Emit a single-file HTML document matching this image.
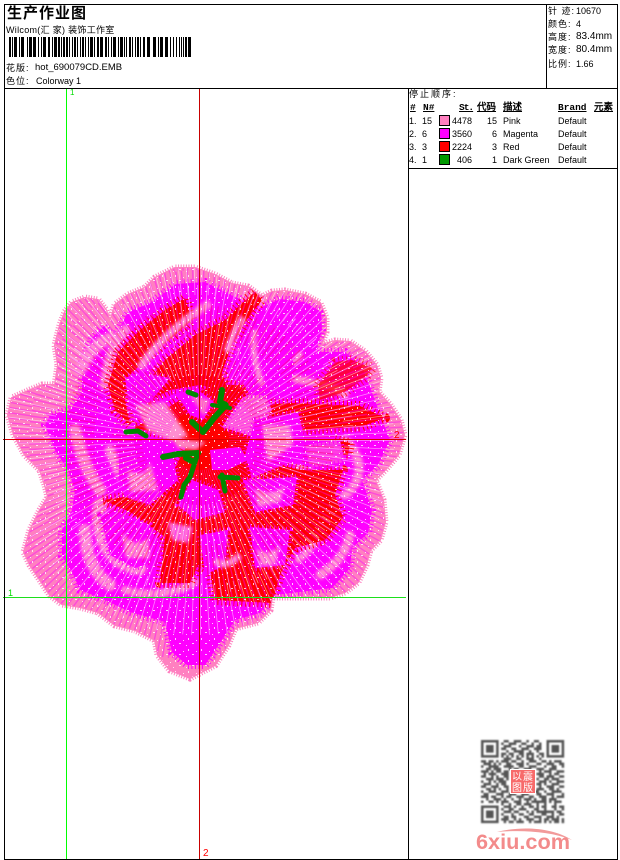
<!DOCTYPE html>
<html>
<head>
<meta charset="utf-8">
<style>
html,body{margin:0;padding:0;background:#fff}
body{position:relative;width:620px;height:860px;overflow:hidden;font-family:"Liberation Sans","WenQuanYi Zen Hei","Noto Sans CJK SC",sans-serif;color:#000;font-size:9px}
.t{position:absolute;white-space:nowrap;line-height:12px;height:12px}
.l{position:absolute;background:#000}
.r{text-align:right}
.c{letter-spacing:1px}
.h{font-weight:bold;text-decoration:underline;font-family:"Liberation Mono","WenQuanYi Zen Hei",monospace;font-size:9.5px}
.sw{position:absolute;width:9px;height:9px;border:1px solid #000}
svg{position:absolute;left:0;top:0}
</style>
</head>
<body>
<svg width="620" height="860" viewBox="0 0 620 860">
<defs>
<path id="s" d="M65 312L72 303L85 298L98 300L106 310L110 322L115 305L128 295L145 288L155 278L175 268L195 268L215 275L232 284L248 287L262 297L272 292L285 291L305 295L320 303L326 318L326 332L321 345L335 341L350 342L365 352L376 365L380 378L378 392L390 405L400 420L404 435L398 455L385 470L375 480L383 500L385 522L380 540L370 550L366 565L358 582L345 592L330 597L272 597L270 610L258 622L235 628L228 645L215 665L190 678L170 670L158 655L155 640L135 630L115 625L98 612L80 607L62 604L50 595L40 580L30 565L24 552L30 530L40 510L48 497L45 485L40 470L25 455L14 435L8 415L12 398L30 390L42 385L55 385L58 365L55 345L60 325Z"/>
<clipPath id="c"><use href="#s"/></clipPath>
<pattern id="sp" width="13" height="11" patternUnits="userSpaceOnUse">
  <rect x="1" y="2" width="1" height="1" fill="#fff"/>
  <rect x="6" y="0" width="1" height="2" fill="#fff"/>
  <rect x="10" y="5" width="2" height="1" fill="#fff"/>
  <rect x="4" y="7" width="1" height="1" fill="#fff"/>
</pattern>
<filter id="q"><feGaussianBlur stdDeviation=".35"/></filter>
<filter id="b" x="-20%" y="-20%" width="140%" height="140%"><feGaussianBlur stdDeviation="1.6"/></filter>
</defs>

<!-- flower base -->
<use href="#s" fill="#ff80c0" stroke="#ff80c0" stroke-width="2"/>
<use href="#s" fill="none" stroke="#ff80c0" stroke-width="7" stroke-dasharray="1 1.6"/>

<g clip-path="url(#c)">
  <!-- magenta body -->
  <path d="M92 338L104 326L114 338L128 312L152 302L176 284L205 282L235 297L262 307L280 299L305 302L321 312L322 330L316 352L345 352L362 367L370 387L383 422L390 440L378 465L362 480L372 510L368 533L352 548L350 568L332 588L275 595L260 613L235 620L220 643L205 665L187 665L172 652L165 622L130 612L105 600L80 590L72 572L62 556L62 530L72 510L75 490L68 470L55 450L45 425L50 415L70 410L82 392L82 362Z" fill="#f0f" stroke="#f0f" stroke-width="8" stroke-dasharray="1 2.5"/>

  <!-- pale areas -->
  <g fill="none" stroke="#ff8ed0" stroke-linecap="round" filter="url(#b)">
    <path d="M80 370C90 350 100 340 112 338" stroke-width="12"/>
    <path d="M105 385C108 362 112 345 125 330" stroke-width="10"/>
    <path d="M75 430C80 450 85 470 100 490" stroke-width="12"/>
    <path d="M85 530C85 555 95 575 110 585" stroke-width="12"/>
    <path d="M100 505C95 535 110 565 140 568" stroke-width="14"/>
    <path d="M125 590C150 598 180 592 195 582" stroke-width="8"/>
    <path d="M280 370C295 385 330 380 345 395" stroke-width="8"/>
    <path d="M345 440C362 455 365 480 345 495" stroke-width="9"/>
    <path d="M320 575C335 565 345 555 350 535" stroke-width="9"/>
    <path d="M298 560C318 545 325 525 320 505" stroke-width="7"/>
    <path d="M110 450C120 480 135 500 165 500" stroke-width="10"/>
    <path d="M245 510C265 520 285 505 300 470" stroke-width="10"/>
    <path d="M240 350C245 375 280 385 300 355" stroke-width="6"/>
  </g>

  <!-- red regions -->
  <g fill="#f00" stroke="#f00" stroke-width="10" stroke-dasharray="1 3" stroke-linejoin="round">
    <path d="M118 352L140 330L165 310L185 298L192 320L175 335L150 355L130 375L125 400L130 425L115 410L108 385Z"/>
    <path d="M255 292L262 300L245 322L232 345L222 372L228 392L200 385L170 390L150 400L145 385L165 360L195 335L225 320L240 305Z"/>
    <path d="M318 385L335 362L352 360L372 368L365 378L340 395L320 400Z" opacity=".75"/>
    <path d="M263 405L290 403L360 406L385 418L360 427L300 430L283 437L265 437Z"/>
    <path d="M335 440L350 443L348 455L335 455Z"/>
    <path d="M103 500L125 497L150 505L168 480L190 440L135 428L180 400L215 385L250 385L248 415L265 440L280 465L300 470L343 470L335 495L343 518L325 540L295 548L280 575L272 603L215 600L210 570L198 565L190 583L160 583L165 537L130 512Z"/>
  </g>

  <!-- petals over red -->
  <g stroke-width="6" stroke-dasharray="1 3" stroke-linejoin="round">
    <path d="M125 378L140 372L170 378L150 402L130 410Z" fill="#f0f" stroke="#f0f"/>
    <path d="M176 393L198 390L214 402L203 420L190 415Z" fill="#f0f" stroke="#f0f"/>
    <path d="M222 427L242 398L262 388L272 410L254 437Z" fill="#ff66d8" stroke="#f0f"/>
    <path d="M120 440L170 448L178 480L150 505L118 490Z" fill="#f0f" stroke="#f0f"/>
    <path d="M210 450L240 447L248 460L228 470L212 470Z" fill="#f0f"/>
    <path d="M255 420L298 412L305 440L290 462L252 478L245 455Z" fill="#f0f" stroke="#f0f"/>
    <path d="M243 480L297 477L293 505L255 512Z" fill="#f0f" stroke="#f0f"/>
    <path d="M305 445L340 440L345 462L310 468Z" fill="#ff40e0" stroke="#f0f"/>
    <path d="M192 480L218 490L225 512L195 520L178 505Z" fill="#f0f" stroke="#f0f"/>
    <path d="M100 515L120 512L150 525L160 560L135 568L110 555Z" fill="#f0f" stroke="#f0f"/>
    <path d="M250 527L290 530L285 565L255 568Z" fill="#f0f" stroke="#f0f"/>
    <path d="M200 535L228 530L225 565L205 575Z" fill="#f0f" stroke="#f0f"/>
    <path d="M240 340L258 325L285 330L295 370L285 395L250 395L238 375Z" fill="#f0f" stroke="#f0f"/>
  </g>
  <g filter="url(#b)">
    <path d="M135 405L165 402L188 436L170 441L147 430Z" fill="#ff8ed0"/>
    <path d="M172 438L206 442L196 450L178 448Z" fill="#ff80c0"/>
    <path d="M190 395L210 400L204 416Z" fill="#ff80c0"/>
    <path d="M262 425L290 425L293 445L268 462Z" fill="#ff8ed0"/>
    <path d="M128 470Q145 480 150 462L158 490L130 492Z" fill="#ff8ed0"/>
    <path d="M255 488Q272 498 285 485L280 502L258 507Z" fill="#ff8ed0"/>
    <path d="M122 532Q135 550 148 538L150 558L126 558Z" fill="#ff8ed0"/>
    <path d="M256 548Q268 558 280 545L275 565L260 566Z" fill="#ff8ed0"/>
    <path d="M168 522L193 527L188 543L172 540Z" fill="#ff70d8"/>
    <path d="M140 368Q160 335 210 303" fill="none" stroke="#ff8ed0" stroke-width="8"/>
    <path d="M243 317Q232 335 227 352" fill="none" stroke="#ff8ed0" stroke-width="7"/>
    <path d="M255 330Q250 350 262 385" fill="none" stroke="#ff8ed0" stroke-width="6"/>
    <path d="M215 560Q225 570 240 555" fill="none" stroke="#ff8ed0" stroke-width="7"/>
  </g>

  <!-- radial stitch streaks -->
  <g fill="none" stroke="#f0f" opacity=".42">
    <circle cx="199" cy="440" r="50" stroke-width="40" stroke-dasharray="1 2"/>
    <circle cx="199" cy="440" r="95" stroke-width="50" stroke-dasharray="1.2 3"/>
    <circle cx="199" cy="440" r="145" stroke-width="50" stroke-dasharray="1.4 3.4"/>
    <circle cx="199" cy="440" r="195" stroke-width="50" stroke-dasharray="1.4 3.8"/>
  </g>
  <g fill="none" stroke="#f00" opacity=".3">
    <circle cx="199" cy="440" r="72" stroke-width="30" stroke-dasharray="1 4"/>
    <circle cx="199" cy="440" r="120" stroke-width="30" stroke-dasharray="1 5"/>
  </g>
  <g fill="none" stroke="#fff" opacity=".5">
    <circle cx="199" cy="440" r="110" stroke-width="90" stroke-dasharray=".8 6"/>
    <circle cx="199" cy="440" r="170" stroke-width="50" stroke-dasharray=".8 7"/>
  </g>

  <!-- speckle -->
  <use href="#s" fill="url(#sp)" opacity=".8"/>

  <!-- green -->
  <g fill="none" stroke="#008a00" stroke-width="5" stroke-linecap="round" stroke-linejoin="round" stroke-dasharray="4 .8">
    <path d="M126 432L138 431L146 436" stroke-width="5"/>
    <path d="M188 392L196 395"/>
    <path d="M222 390L220 402L226 405L214 418L203 432L192 422" stroke-width="6"/>
    <path d="M212 405L230 408" stroke-width="4"/>
    <path d="M163 457L178 454L198 453M186 458L194 462" stroke-width="6"/>
    <path d="M197 456L190 477L184 485L181 497" stroke-width="5"/>
    <path d="M220 477L238 478M222 475L225 491" stroke-width="5"/>
  </g>
</g>

<!-- guide lines -->
<rect x="66" y="88" width="1" height="771" fill="#0f0"/>
<rect x="199" y="88" width="1" height="771" fill="#c80000"/>
<rect x="3" y="439" width="403" height="1" fill="#d80000"/>
<rect x="3" y="597" width="403" height="1" fill="#1be01b"/>

<!-- barcode -->
<g fill="#000">
<rect x="9" y="37" width="2" height="20"/><rect x="12" y="37" width="1" height="20"/><rect x="14" y="37" width="3" height="20"/><rect x="19" y="37" width="1" height="20"/><rect x="21" y="37" width="3" height="20"/><rect x="27" y="37" width="1" height="20"/><rect x="29" y="37" width="3" height="20"/><rect x="33" y="37" width="3" height="20"/><rect x="38" y="37" width="1" height="20"/><rect x="41" y="37" width="1" height="20"/><rect x="43" y="37" width="3" height="20"/><rect x="48" y="37" width="2" height="20"/><rect x="52" y="37" width="1" height="20"/><rect x="54" y="37" width="3" height="20"/><rect x="58" y="37" width="2" height="20"/><rect x="61" y="37" width="1" height="20"/><rect x="63" y="37" width="2" height="20"/><rect x="66" y="37" width="2" height="20"/><rect x="69" y="37" width="1" height="20"/><rect x="72" y="37" width="1" height="20"/><rect x="74" y="37" width="2" height="20"/><rect x="77" y="37" width="1" height="20"/><rect x="80" y="37" width="1" height="20"/><rect x="82" y="37" width="2" height="20"/><rect x="85" y="37" width="1" height="20"/><rect x="88" y="37" width="1" height="20"/><rect x="90" y="37" width="3" height="20"/><rect x="94" y="37" width="1" height="20"/><rect x="97" y="37" width="2" height="20"/><rect x="100" y="37" width="3" height="20"/><rect x="105" y="37" width="2" height="20"/><rect x="108" y="37" width="1" height="20"/><rect x="111" y="37" width="1" height="20"/><rect x="113" y="37" width="3" height="20"/><rect x="118" y="37" width="1" height="20"/><rect x="120" y="37" width="3" height="20"/><rect x="124" y="37" width="1" height="20"/><rect x="126" y="37" width="1" height="20"/><rect x="129" y="37" width="2" height="20"/><rect x="132" y="37" width="1" height="20"/><rect x="135" y="37" width="1" height="20"/><rect x="137" y="37" width="2" height="20"/><rect x="140" y="37" width="1" height="20"/><rect x="143" y="37" width="2" height="20"/><rect x="147" y="37" width="3" height="20"/><rect x="153" y="37" width="3" height="20"/><rect x="158" y="37" width="1" height="20"/><rect x="160" y="37" width="3" height="20"/><rect x="165" y="37" width="3" height="20"/><rect x="170" y="37" width="1" height="20"/><rect x="173" y="37" width="1" height="20"/><rect x="176" y="37" width="1" height="20"/><rect x="179" y="37" width="1" height="20"/><rect x="181" y="37" width="1" height="20"/><rect x="183" y="37" width="1" height="20"/><rect x="185" y="37" width="2" height="20"/><rect x="188" y="37" width="3" height="20"/>
</g>

<!-- QR -->
<g transform="translate(481 740) scale(2.52)" fill="none" stroke="#555" stroke-width="1" filter="url(#q)">
<path d="M0 .5h7M9 .5h2M13 .5h3M18 .5h1M21 .5h2M26 .5h7
M0 1.5h1M6 1.5h1M8 1.5h1M11 1.5h3M16 1.5h2M20 1.5h1M23 1.5h1M26 1.5h1M32 1.5h1
M0 2.5h1M2 2.5h3M6 2.5h1M9 2.5h3M15 2.5h1M18 2.5h3M22 2.5h2M26 2.5h1M28 2.5h3M32 2.5h1
M0 3.5h1M2 3.5h3M6 3.5h1M8 3.5h2M12 3.5h2M16 3.5h3M21 3.5h3M26 3.5h1M28 3.5h3M32 3.5h1
M0 4.5h1M2 4.5h3M6 4.5h1M10 4.5h1M13 4.5h4M19 4.5h1M22 4.5h1M26 4.5h1M28 4.5h3M32 4.5h1
M0 5.5h1M6 5.5h1M8 5.5h2M11 5.5h2M15 5.5h2M18 5.5h3M23 5.5h2M26 5.5h1M32 5.5h1
M0 6.5h7M8 6.5h1M10 6.5h1M12 6.5h1M14 6.5h1M16 6.5h1M18 6.5h1M20 6.5h1M22 6.5h1M24 6.5h1M26 6.5h7
M9 7.5h3M14 7.5h2M18 7.5h3M23 7.5h1
M0 8.5h2M3 8.5h2M6 8.5h1M8 8.5h3M12 8.5h2M16 8.5h1M19 8.5h3M24 8.5h2M27 8.5h1M29 8.5h3
M1 9.5h3M5 9.5h1M7 9.5h1M10 9.5h2M14 9.5h3M18 9.5h1M22 9.5h2M26 9.5h3M31 9.5h2
M0 10.5h1M3 10.5h3M6 10.5h1M9 10.5h4M15 10.5h2M19 10.5h3M25 10.5h1M28 10.5h2M32 10.5h1
M2 11.5h2M5 11.5h3M11 11.5h1M13 11.5h2M17 11.5h3M22 11.5h3M27 11.5h3
M0 12.5h3M4 12.5h1M6 12.5h2M9 12.5h2M15 12.5h1M20 12.5h1M23 12.5h1M25 12.5h3M30 12.5h3
M1 13.5h1M3 13.5h3M8 13.5h3M22 13.5h3M27 13.5h1M29 13.5h2
M0 14.5h2M4 14.5h1M6 14.5h1M9 14.5h2M23 14.5h2M26 14.5h3M31 14.5h2
M2 15.5h3M6 15.5h3M10 15.5h1M22 15.5h1M25 15.5h2M28 15.5h3
M0 16.5h1M3 16.5h1M5 16.5h1M7 16.5h3M23 16.5h3M27 16.5h1M30 16.5h3
M1 17.5h3M6 17.5h1M8 17.5h2M22 17.5h2M25 17.5h1M28 17.5h3
M0 18.5h2M4 18.5h3M9 18.5h2M23 18.5h1M26 18.5h3M31 18.5h2
M2 19.5h2M5 19.5h1M7 19.5h1M10 19.5h1M22 19.5h3M27 19.5h2M30 19.5h1
M0 20.5h1M3 20.5h3M8 20.5h3M13 20.5h2M17 20.5h1M20 20.5h3M25 20.5h1M28 20.5h4
M1 21.5h2M6 21.5h3M11 21.5h3M16 21.5h3M22 21.5h2M26 21.5h3M32 21.5h1
M0 22.5h3M4 22.5h2M8 22.5h1M10 22.5h2M14 22.5h3M19 22.5h2M23 22.5h3M28 22.5h1M30 22.5h3
M2 23.5h1M5 23.5h3M9 23.5h1M12 23.5h1M15 23.5h1M17 23.5h3M21 23.5h1M24 23.5h2M27 23.5h3
M0 24.5h1M3 24.5h2M6 24.5h1M8 24.5h3M13 24.5h3M18 24.5h1M20 24.5h6M27 24.5h1M29 24.5h3
M8 25.5h1M11 25.5h1M14 25.5h2M17 25.5h3M22 25.5h1M25 25.5h1M29 25.5h1
M0 26.5h7M9 26.5h3M13 26.5h1M16 26.5h1M19 26.5h2M22 26.5h1M24 26.5h1M25 26.5h1M28 26.5h2M31 26.5h2
M0 27.5h1M6 27.5h1M8 27.5h1M11 27.5h2M15 27.5h3M21 27.5h2M25 27.5h1M29 27.5h1M32 27.5h1
M0 28.5h1M2 28.5h3M6 28.5h1M9 28.5h3M13 28.5h2M18 28.5h1M20 28.5h1M22 28.5h7M30 28.5h2
M0 29.5h1M2 29.5h3M6 29.5h1M8 29.5h1M12 29.5h1M15 29.5h2M19 29.5h2M24 29.5h2M28 29.5h1M31 29.5h2
M0 30.5h1M2 30.5h3M6 30.5h1M9 30.5h2M12 30.5h2M17 30.5h2M21 30.5h3M26 30.5h3M30 30.5h1
M0 31.5h1M6 31.5h1M8 31.5h3M13 31.5h1M15 31.5h1M18 31.5h3M23 31.5h1M25 31.5h2M28 31.5h3M32 31.5h1
M0 32.5h7M9 32.5h1M11 32.5h2M14 32.5h3M19 32.5h1M21 32.5h3M25 32.5h1M27 32.5h1M29 32.5h2M32 32.5h1"/>
</g>
<rect x="510" y="769" width="26" height="25" fill="#fff"/>
<rect x="511" y="770" width="24" height="23" fill="#f76a6a"/>
<text x="512" y="780" font-size="10" fill="#fff" font-family="'WenQuanYi Zen Hei','Noto Sans CJK SC',sans-serif">以</text>
<text x="523" y="780" font-size="10" fill="#fff" font-family="'WenQuanYi Zen Hei','Noto Sans CJK SC',sans-serif">震</text>
<text x="512" y="791" font-size="10" fill="#fff" font-family="'WenQuanYi Zen Hei','Noto Sans CJK SC',sans-serif">图</text>
<text x="523" y="791" font-size="10" fill="#fff" font-family="'WenQuanYi Zen Hei','Noto Sans CJK SC',sans-serif">版</text>

<!-- 6xiu logo -->
<path d="M497 832C520 826 552 827 572 840C550 831 520 830 497 832Z" fill="#f29a9a"/>
<text x="476" y="849" font-size="21.7" font-weight="bold" fill="#f38b8b" font-family="'Liberation Sans',sans-serif">6xiu.com</text>

<text x="70" y="95" font-size="8" fill="#0d0" font-family="'Liberation Sans',sans-serif">1</text>
<text x="8" y="596" font-size="9" fill="#0d0" font-family="'Liberation Sans',sans-serif">1</text>
<text x="394" y="438" font-size="10" fill="#f00" font-family="'Liberation Sans',sans-serif">2</text>
<text x="203" y="856" font-size="10" fill="#f00" font-family="'Liberation Sans',sans-serif">2</text>
</svg>

<!-- frame -->
<div class="l" style="left:4px;top:4px;width:614px;height:1px"></div>
<div class="l" style="left:4px;top:88px;width:614px;height:1px"></div>
<div class="l" style="left:4px;top:859px;width:614px;height:1px"></div>
<div class="l" style="left:4px;top:4px;width:1px;height:856px"></div>
<div class="l" style="left:617px;top:4px;width:1px;height:856px"></div>
<div class="l" style="left:546px;top:4px;width:1px;height:85px"></div>
<div class="l" style="left:408px;top:88px;width:1px;height:772px"></div>
<div class="l" style="left:408px;top:168px;width:210px;height:1px"></div>

<!-- header left -->
<div class="t" style="left:7px;top:6px;font-size:15px;font-weight:bold;line-height:16px;height:16px;letter-spacing:1px">生产作业图</div>
<div class="t" style="left:6px;top:24px;font-size:9px;letter-spacing:.3px">Wilcom(汇 家) 装饰工作室</div>
<div class="t" style="left:6px;top:62px"><span class="c">花版:</span></div><div class="t" style="left:35px;top:62px;font-size:9.5px">hot_690079CD.EMB</div>
<div class="t" style="left:6px;top:75px"><span class="c">色位:</span></div><div class="t" style="left:36px;top:75px">Colorway 1</div>

<!-- header right -->
<div class="t c" style="left:548px;top:5px">针 迹:</div><div class="t" style="left:576px;top:5px">10670</div>
<div class="t c" style="left:548px;top:18px">颜色:</div><div class="t" style="left:576px;top:18px">4</div>
<div class="t c" style="left:548px;top:31px">高度:</div><div class="t" style="left:576px;top:31px;font-size:10px">83.4mm</div>
<div class="t c" style="left:548px;top:44px">宽度:</div><div class="t" style="left:576px;top:44px;font-size:10px">80.4mm</div>
<div class="t c" style="left:548px;top:58px">比例:</div><div class="t" style="left:576px;top:58px">1.66</div>

<!-- thread table -->
<div class="t c" style="left:409px;top:88px;letter-spacing:2px">停止顺序:</div>
<div class="t h" style="left:410px;top:102px">#</div>
<div class="t h" style="left:423px;top:102px">N#</div>
<div class="t h" style="left:459px;top:102px;letter-spacing:-1px">St.</div>
<div class="t h" style="left:477px;top:102px">代码</div>
<div class="t h" style="left:503px;top:102px">描述</div>
<div class="t h" style="left:558px;top:102px">Brand</div>
<div class="t h" style="left:594px;top:102px">元素</div>

<div class="t" style="left:409px;top:115px">1.</div><div class="t" style="left:422px;top:115px">15</div>
<div class="sw" style="left:439px;top:115px;background:#ff80c0"></div>
<div class="t r" style="left:440px;width:32px;top:115px">4478</div><div class="t r" style="left:477px;width:20px;top:115px">15</div>
<div class="t" style="left:503px;top:115px">Pink</div><div class="t" style="left:558px;top:115px">Default</div>

<div class="t" style="left:409px;top:128px">2.</div><div class="t" style="left:422px;top:128px">6</div>
<div class="sw" style="left:439px;top:128px;background:#f0f"></div>
<div class="t r" style="left:440px;width:32px;top:128px">3560</div><div class="t r" style="left:477px;width:20px;top:128px">6</div>
<div class="t" style="left:503px;top:128px">Magenta</div><div class="t" style="left:558px;top:128px">Default</div>

<div class="t" style="left:409px;top:141px">3.</div><div class="t" style="left:422px;top:141px">3</div>
<div class="sw" style="left:439px;top:141px;background:#f00"></div>
<div class="t r" style="left:440px;width:32px;top:141px">2224</div><div class="t r" style="left:477px;width:20px;top:141px">3</div>
<div class="t" style="left:503px;top:141px">Red</div><div class="t" style="left:558px;top:141px">Default</div>

<div class="t" style="left:409px;top:154px">4.</div><div class="t" style="left:422px;top:154px">1</div>
<div class="sw" style="left:439px;top:154px;background:#090"></div>
<div class="t r" style="left:440px;width:32px;top:154px">406</div><div class="t r" style="left:477px;width:20px;top:154px">1</div>
<div class="t" style="left:503px;top:154px">Dark Green</div><div class="t" style="left:558px;top:154px">Default</div>
</body>
</html>
